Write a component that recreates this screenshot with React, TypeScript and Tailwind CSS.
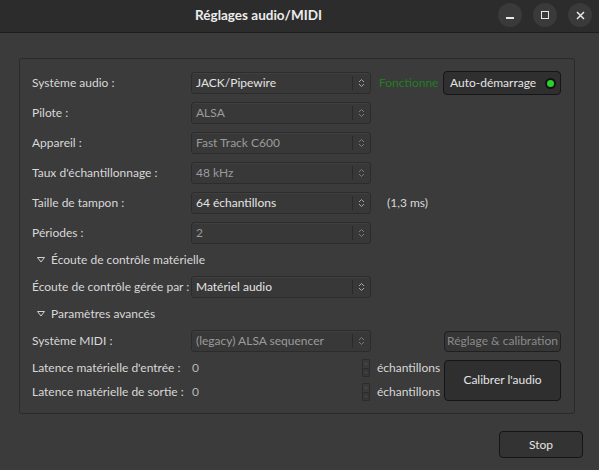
import React from "react";

const font = { fontFamily: "Lato, 'Noto Sans', sans-serif" };
const T = "text-[12px] leading-none whitespace-nowrap";

function UpDown({ dim = false }: { dim?: boolean }) {
  return (
    <svg width="7" height="10" viewBox="0 0 7 10" className={dim ? "opacity-60" : ""}>
      <path d="M1 4 L3.5 1.5 L6 4" fill="none" stroke="#a8a8a8" strokeWidth="1" />
      <path d="M1 6 L3.5 8.5 L6 6" fill="none" stroke="#a8a8a8" strokeWidth="1" />
    </svg>
  );
}

function Combo({ value, disabled = false }: { value: string; disabled?: boolean }) {
  return (
    <div className="flex h-[22px] w-[180px] shrink-0 items-center rounded-[3px] border border-[#2c2c2c] bg-[#383838] shadow-[inset_0_1px_0_#404040]">
      <span className={`flex-1 pl-[4px] ${T} ${disabled ? "text-[#9b9b9b]" : "text-[#e4e4e4]"}`}>{value}</span>
      <div className="h-[14px] w-px bg-[#2a2a2a]" />
      <div className="flex w-[17px] items-center justify-center">
        <UpDown dim={disabled} />
      </div>
    </div>
  );
}

function Label({ children }: { children: React.ReactNode }) {
  return <div className={`w-[159px] shrink-0 ${T} text-[#d8d8d8]`}>{children}</div>;
}

function Row({ label, children }: { label: string; children: React.ReactNode }) {
  return (
    <div className="flex h-[22px] shrink-0 items-center">
      <Label>{label}</Label>
      {children}
    </div>
  );
}

function Section({ title }: { title: string }) {
  return (
    <div className={`flex h-[16px] shrink-0 items-center pl-[5px] ${T} text-[#d8d8d8]`}>
      <svg width="8" height="6" viewBox="0 0 8 6" className="mr-[6px]">
        <path d="M0.5 0.5 L7.5 0.5 L4 5 Z" fill="none" stroke="#d0d0d0" strokeWidth="1" />
      </svg>
      {title}
    </div>
  );
}

function Spin() {
  return (
    <div className="flex h-[18px] w-[8px] flex-col overflow-hidden rounded-[1px] border border-[#2c2c2c]">
      <div className="flex flex-1 items-center justify-center bg-[#3a3a3a]">
        <svg width="4" height="3" viewBox="0 0 4 3"><path d="M0.5 2.5 L2 0.8 L3.5 2.5" fill="none" stroke="#555" strokeWidth="0.8" /></svg>
      </div>
      <div className="h-px bg-[#2c2c2c]" />
      <div className="flex flex-1 items-center justify-center bg-[#363636]">
        <svg width="4" height="3" viewBox="0 0 4 3"><path d="M0.5 0.5 L2 2.2 L3.5 0.5" fill="none" stroke="#555" strokeWidth="0.8" /></svg>
      </div>
    </div>
  );
}

function LatRow({ label }: { label: string }) {
  return (
    <div className="flex h-[20px] items-center">
      <Label>{label}</Label>
      <div className={`w-[171px] pl-[1px] ${T} text-[#b8b8b8]`}>0</div>
      <Spin />
      <div className={`ml-[7px] ${T} text-[#d8d8d8]`}>échantillons</div>
    </div>
  );
}

export default function App() {
  return (
    <div className="flex h-[470px] w-[599px] flex-col overflow-hidden bg-[#3b3b3b]" style={font}>
      {/* title bar */}
      <div className="relative flex h-[33px] shrink-0 items-center justify-center border-b border-[#1e1e1e] bg-[#2c2c2c] pr-[82px]">
        <span className="text-[13.5px] font-bold leading-none text-[#ececec]">Réglages audio/MIDI</span>
        <div className="absolute right-[7px] top-[3px] flex gap-[11px]">
          <div className="flex h-[24px] w-[24px] items-center justify-center rounded-full bg-[#3a3a3a]">
            <div className="mt-[6px] h-[1.5px] w-[8px] bg-[#e8e8e8]" />
          </div>
          <div className="flex h-[24px] w-[24px] items-center justify-center rounded-full bg-[#3a3a3a]">
            <div className="h-[8px] w-[8px] border-[1.5px] border-[#e8e8e8]" />
          </div>
          <div className="flex h-[24px] w-[24px] items-center justify-center rounded-full bg-[#3a3a3a]">
            <svg width="9" height="9" viewBox="0 0 9 9"><path d="M1 1 L8 8 M8 1 L1 8" stroke="#e8e8e8" strokeWidth="1.5" /></svg>
          </div>
        </div>
      </div>

      {/* body */}
      <div className="flex flex-1 flex-col pl-[19px] pr-[24px] pt-[25px]">
        <div className="flex flex-col gap-[8px] rounded-[3px] border border-[#2a2a2a] pb-[11px] pl-[12px] pt-[13px]">
          <Row label="Système audio :">
            <Combo value="JACK/Pipewire" />
            <span className={`ml-[8px] w-[64px] ${T} text-[#1f7f1f]`}>Fonctionne</span>
            <div className="flex h-[24px] w-[118px] items-center justify-between rounded-[4px] border border-[#151515] bg-[#2f2f2f] pl-[6px] pr-[4px]">
              <span className={`${T} text-[#e4e4e4]`}>Auto-démarrage</span>
              <div className="flex h-[11px] w-[11px] items-center justify-center rounded-full bg-[#111]">
                <div className="h-[7px] w-[7px] rounded-full bg-[#2ad12a]" />
              </div>
            </div>
          </Row>
          <Row label="Pilote :"><Combo value="ALSA" disabled /></Row>
          <Row label="Appareil :"><Combo value="Fast Track C600" disabled /></Row>
          <Row label="Taux d'échantillonnage :"><Combo value="48 kHz" disabled /></Row>
          <Row label="Taille de tampon :">
            <Combo value="64 échantillons" />
            <span className={`ml-[16px] ${T} text-[#d8d8d8]`}>(1,3 ms)</span>
          </Row>
          <Row label="Périodes :"><Combo value="2" disabled /></Row>
          <Section title="Écoute de contrôle matérielle" />
          <Row label="Écoute de contrôle gérée par :"><Combo value="Matériel audio" /></Row>
          <Section title="Paramètres avancés" />
          <Row label="Système MIDI :">
            <Combo value="(legacy) ALSA sequencer" disabled />
            <div className={`ml-[73px] flex h-[21px] w-[117px] items-center justify-center rounded-[4px] border border-[#202020] bg-[#363636] ${T} text-[#8a8a8a]`}>
              Réglage &amp; calibration
            </div>
          </Row>
          <div className="-mt-[2px] flex shrink-0 items-center">
            <div className="flex w-[412px] flex-col gap-[4px]">
              <LatRow label="Latence matérielle d'entrée :" />
              <LatRow label="Latence matérielle de sortie :" />
            </div>
            <div className={`flex h-[41px] w-[117px] items-center justify-center rounded-[4px] border border-[#151515] bg-[#2f2f2f] ${T} text-[#e4e4e4]`}>
              Calibrer l'audio
            </div>
          </div>
        </div>
        <div className="mt-[17px] flex justify-end">
          <div className={`-mr-[8px] flex h-[27px] w-[84px] items-center justify-center rounded-[4px] border border-[#151515] bg-[#333333] ${T} text-[#e4e4e4]`}>
            Stop
          </div>
        </div>
      </div>
    </div>
  );
}
